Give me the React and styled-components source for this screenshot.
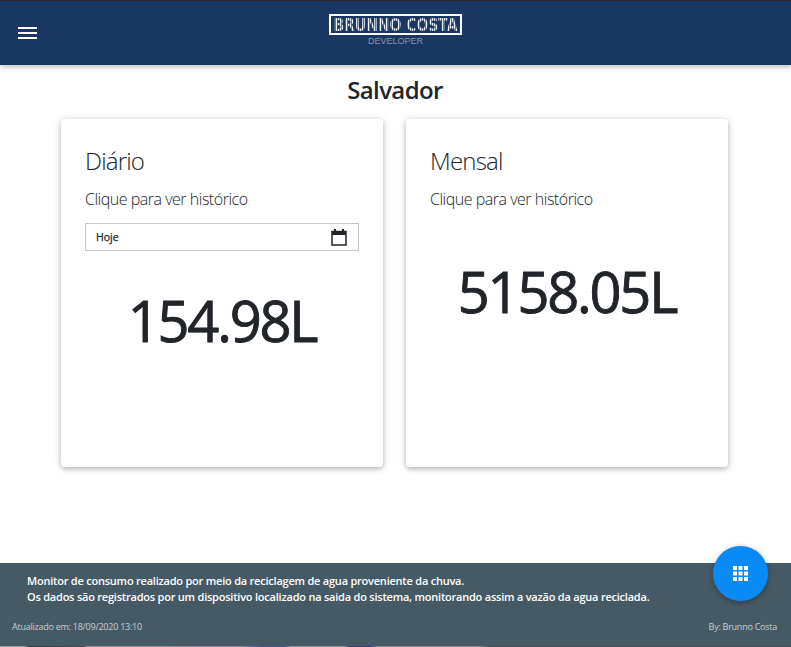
import React from 'react';
import styled, { createGlobalStyle } from 'styled-components';

const Global = createGlobalStyle`
  html, body { margin: 0; padding: 0; height: 100%; background: #fff; }
  body { font-family: "Open Sans", "Noto Sans", "Liberation Sans", sans-serif; color: #212529; overflow: hidden; }
  * { box-sizing: border-box; }
`;
const Page = styled.div`
  width: 791px; height: 647px; display: flex; flex-direction: column; position: relative; overflow: hidden;
`;
const Header = styled.header`
  height: 65px; flex: none; background: #193763; border-top: 1px solid #2a2a2a;
  box-shadow: 0 2px 5px rgba(0,0,0,.26); display: flex; align-items: center; justify-content: center; position: relative; z-index: 2;
`;
const Burger = styled.button`
  position: absolute; left: 18px; top: 26px; width: 19px; height: 12px; padding: 0; border: 0; background: transparent;
  display: flex; flex-direction: column; justify-content: space-between;
  span { display: block; height: 2px; background: #fff; }
`;
const Logo = styled.div`
  display: flex; flex-direction: column; align-items: center; margin-top: -6px;
`;
const LogoBox = styled.div`
  width: 133px; height: 21px; border: 2px solid #fff; display: flex; align-items: center; justify-content: center;
  span {
    display: block; transform: scaleY(1.22);
    font: 700 14px/1 "DejaVu Sans", sans-serif; letter-spacing: -.05px; white-space: nowrap; color: transparent;
    background: repeating-linear-gradient(90deg, #eef2f7 0 1px, #5f769b 1px 2px);
    -webkit-background-clip: text; background-clip: text;
  }
`;
const LogoSub = styled.div`
  font: 400 9px/10px "Liberation Sans", sans-serif; letter-spacing: 0; color: #8595ae; margin-top: 1px;
`;
const City = styled.h1`
  margin: 9px 0 13px; padding-right: 1px; font-size: 24px; line-height: 32px; font-weight: 600; letter-spacing: -.6px; text-align: center; color: #212529;
`;
const Cards = styled.main`
  display: flex; justify-content: center; gap: 23px; align-items: flex-start; padding-right: 2px;
`;
const Card = styled.section`
  width: 322px; height: 348px; background: #fff; border-radius: 4px; padding: 24px 24px;
  box-shadow: 0 2px 5px rgba(0,0,0,.22), 0 1px 10px rgba(0,0,0,.12);
`;
const CardTitle = styled.h2`
  margin: 0; font-size: 24px; line-height: 36px; font-weight: 300; letter-spacing: -.8px; color: #212529;
`;
const Hint = styled.p`
  margin: 8px 0 0; font-size: 16px; line-height: 24px; font-weight: 300; letter-spacing: -.48px; color: #212529; height: 24px;
`;
const DateField = styled.div`
  margin-top: 12px; height: 28px; border: 1px solid #c8c8c8; display: flex; align-items: center; justify-content: space-between;
  padding: 0 11px 0 10px; font-size: 10.5px; font-weight: 400; -webkit-text-stroke: .25px #212529; color: #212529;
  svg { display: block; }
`;
const Value = styled.div`
  text-align: center; font-size: 56px; line-height: 84px; font-weight: 400; letter-spacing: -2.2px; -webkit-text-stroke: .9px #212529; color: #212529; margin-top: ${p => p.$top}px;
`;
const Footer = styled.footer`
  margin-top: auto; height: 83px; flex: none; background: #465a65; color: #fff; position: relative;
`;
const PhotoStrip = styled.div`
  height: 1px; flex: none;
  background: linear-gradient(90deg, #9aa3a3 0 25px, #3a3d42 28px 50px, #4a4a50 84px, #9c8a94 86px 170px, #8d8a9d 174px 240px, #4a54a0 260px 285px, #8a9097 290px 345px, #363a78 350px 372px, #8c8890 376px 480px, #3f4a52 490px);
`;
const Note = styled.p`
  margin: 0; padding: 10px 0 0 27px; font-size: 11px; line-height: 16px; font-weight: 600; letter-spacing: -.22px; color: #fff;
`;
const Meta = styled.div`
  display: flex; justify-content: space-between; padding: 0 14px 0 12px; margin-top: 15px; font-size: 9px; line-height: 14px; letter-spacing: -.25px; color: #c7ced3;
`;
const Fab = styled.button`
  position: absolute; right: 23px; top: 546px; width: 55px; height: 55px; border-radius: 50%; border: 0; padding: 0; background: #0a8af5;
  box-shadow: 0 2px 6px rgba(0,0,0,.3); display: flex; align-items: center; justify-content: center; z-index: 3;
`;

export default function App() {
  return (
    <Page>
      <Global />
      <Header>
        <Burger aria-label="menu"><span /><span /><span /></Burger>
        <Logo>
          <LogoBox><span>BRUNNO COSTA</span></LogoBox>
          <LogoSub>DEVELOPER</LogoSub>
        </Logo>
      </Header>
      <City>Salvador</City>
      <Cards>
        <Card>
          <CardTitle>Diário</CardTitle>
          <Hint>Clique para ver histórico</Hint>
          <DateField>
            <span>Hoje</span>
            <svg width="16" height="17" viewBox="0 0 16 17" fill="none">
              <rect x="1" y="2.5" width="14" height="13.5" stroke="#212529" strokeWidth="1.5" />
              <rect x="1" y="2" width="14" height="4" fill="#212529" />
              <rect x="3" y="0" width="2" height="3" fill="#212529" />
              <rect x="11" y="0" width="2" height="3" fill="#212529" />
            </svg>
          </DateField>
          <Value $top={27}>154.98L</Value>
        </Card>
        <Card>
          <CardTitle>Mensal</CardTitle>
          <Hint>Clique para ver histórico</Hint>
          <Value $top={38}>5158.05L</Value>
        </Card>
      </Cards>
      <Footer>
        <Note>
          Monitor de consumo realizado por meio da reciclagem de agua proveniente da chuva.<br />
          Os dados são registrados por um dispositivo localizado na saida do sistema, monitorando assim a vazão da agua reciclada.
        </Note>
        <Meta><span>Atualizado em: 18/09/2020 13:10</span><span>By: Brunno Costa</span></Meta>
      </Footer>
      <PhotoStrip />
      <Fab aria-label="apps">
        <svg width="15" height="15" viewBox="0 0 15 15" fill="#fff">
          {[0, 5.5, 11].flatMap(y => [0, 5.5, 11].map(x => <rect key={`${x}-${y}`} x={x} y={y} width="4" height="4" />))}
        </svg>
      </Fab>
    </Page>
  );
}
